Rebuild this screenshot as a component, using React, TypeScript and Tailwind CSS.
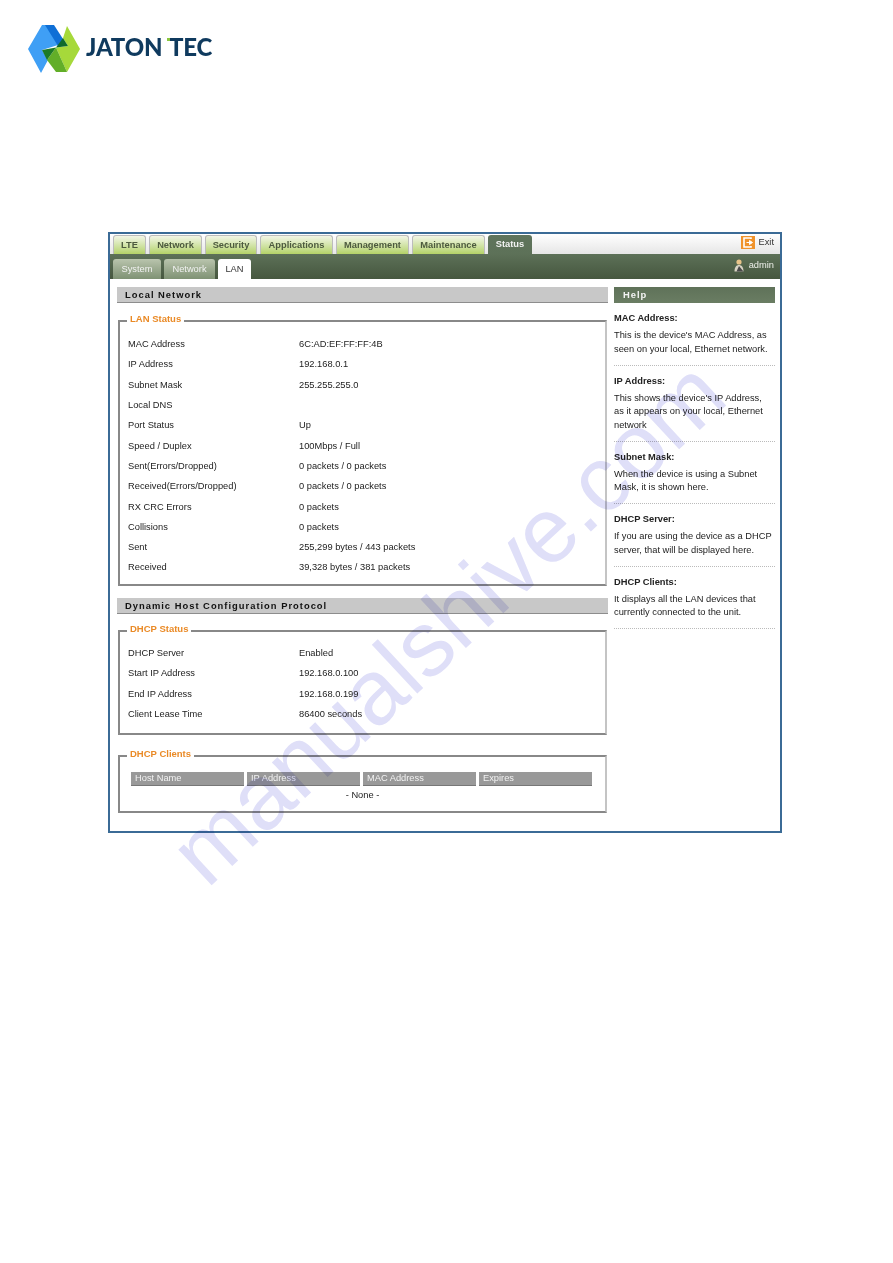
const font = { fontFamily: '"Liberation Sans", Arial, sans-serif' };

const topTabs = [
  { label: 'LTE', w: 'w-[33px]' },
  { label: 'Network', w: 'w-[53px]' },
  { label: 'Security', w: 'w-[52px]' },
  { label: 'Applications', w: 'w-[73px]' },
  { label: 'Management', w: 'w-[73px]' },
  { label: 'Maintenance', w: 'w-[73px]' },
];

const lanRows = [
  ['MAC Address', '6C:AD:EF:FF:FF:4B'],
  ['IP Address', '192.168.0.1'],
  ['Subnet Mask', '255.255.255.0'],
  ['Local DNS', ''],
  ['Port Status', 'Up'],
  ['Speed / Duplex', '100Mbps / Full'],
  ['Sent(Errors/Dropped)', '0 packets / 0 packets'],
  ['Received(Errors/Dropped)', '0 packets / 0 packets'],
  ['RX CRC Errors', '0 packets'],
  ['Collisions', '0 packets'],
  ['Sent', '255,299 bytes / 443 packets'],
  ['Received', '39,328 bytes / 381 packets'],
];

const dhcpRows = [
  ['DHCP Server', 'Enabled'],
  ['Start IP Address', '192.168.0.100'],
  ['End IP Address', '192.168.0.199'],
  ['Client Lease Time', '86400 seconds'],
];

const helpItems = [
  { title: 'MAC Address:', lines: ["This is the device's MAC Address, as", 'seen on your local, Ethernet network.'] },
  { title: 'IP Address:', lines: ["This shows the device's IP Address,", 'as it appears on your local, Ethernet', 'network'] },
  { title: 'Subnet Mask:', lines: ['When the device is using a Subnet', 'Mask, it is shown here.'] },
  { title: 'DHCP Server:', lines: ['If you are using the device as a DHCP', 'server, that will be displayed here.'] },
  { title: 'DHCP Clients:', lines: ['It displays all the LAN devices that', 'currently connected to the unit.'] },
];

function Logo() {
  return (
    <svg width="54" height="50" viewBox="26 24 54 50">
      <polygon points="27,49 41,25 46,25 57,45 41,50 47,60 40,73" fill="#3f9ff5" />
      <polygon points="44,25 53,25 62,39 57,46" fill="#0f6fd6" />
      <polygon points="66,26 79,49 66,72 55,47.500 67,46 62,38" fill="#a6d93a" />
      <polygon points="46,60 55,47.500 66,72 55,72" fill="#62ae28" />
      <polygon points="62,38 67,46 55,47.500" fill="#0e6b2c" />
      <polygon points="41,50 55,47.500 46,60" fill="#1c7a26" />
    </svg>
  );
}

function ExitIcon() {
  return (
    <svg width="14" height="13" viewBox="0 0 14 13">
      <rect width="14" height="13" fill="#f0932b" />
      <path d="M10 3V2H3v9h7v-1" fill="none" stroke="#fff" strokeWidth="1.6" />
      <path d="M5.500 6.500h5M8.500 4.500l3 2-3 2z" fill="#fff" stroke="#fff" />
    </svg>
  );
}

function AdminIcon() {
  return (
    <svg width="10" height="13" viewBox="0 0 10 13">
      <circle cx="5" cy="3" r="2.600" fill="#e8c48a" />
      <path d="M0.500 12.500C0.500 8 2.500 6 5 6s4.500 2 4.500 6.500z" fill="#d8d3c4" />
      <path d="M2.500 12.500 5 7l4.500 5.500z" fill="#4a4a4a" />
    </svg>
  );
}

function SectionBar({ title }: { title: string }) {
  return (
    <div className="h-[16px] bg-[#c8c8c8] border-b border-[#8d8d8d] pl-[8px] text-[9.4px] leading-[15px] font-bold tracking-[1px] text-[#111]">
      {title}
    </div>
  );
}

function Fieldset({ legend, className, children }: { legend: string; className: string; children: React.ReactNode }) {
  return (
    <fieldset className={`ml-px mr-[1px] border-2 border-t-[#888] border-l-[#888] border-r-[#c4c4c4] border-b-[#888] ${className}`}>
      <legend className="ml-[7px] px-[3px] pb-[4px] text-[9.5px] leading-[11px] font-bold text-[#ea8a26]">{legend}</legend>
      {children}
    </fieldset>
  );
}

function Row({ label, value }: { label: string; value: string }) {
  return (
    <div className="flex h-[20.3px] items-center pl-[8px] text-[9.3px] text-[#222]">
      <span className="w-[171px]">{label}</span>
      <span>{value}</span>
    </div>
  );
}

export default function App() {
  return (
    <div className="relative h-[1263px] overflow-hidden bg-white" style={font}>
      <div className="flex h-[232px] items-start pl-[27px] pt-[24px]">
        <Logo />
        <div className="relative ml-[5px] mt-[10px] text-[24px] leading-[25px] font-black tracking-[-0.2px] text-[#0f3a5e] [word-spacing:2px]" style={{ fontFamily: 'Lato, sans-serif' }}>
          JATON TEC
          <span className="absolute left-[81px] top-[4px] h-[3px] w-[3px] bg-[#8bc63f]" />
        </div>
      </div>

      <div className="ml-[108px] h-[601px] w-[674px] border-2 border-[#3b6b96]">
        <div className="flex h-[20px] items-end bg-gradient-to-b from-white to-[#e6e6e6] pl-[3px] pr-[6px]">
          <div className="flex h-[19px] gap-[3px]">
            {topTabs.map(t => (
              <div key={t.label} className={`${t.w} rounded-t-[3px] border border-b-0 border-[#bcbcbc] bg-gradient-to-b from-[#f3f6e6] to-[#b4d267] text-center text-[9.3px] leading-[18px] font-bold text-[#4d5a3e]`}>
                {t.label}
              </div>
            ))}
            <div className="w-[44px] rounded-t-[3px] bg-gradient-to-b from-[#5f745c] to-[#5d7158] text-center text-[9.3px] leading-[19px] font-bold text-[#f2f2f2]">
              Status
            </div>
          </div>
          <div className="ml-auto flex items-center gap-[4px] self-start pt-[2px] text-[9.3px] text-[#333]">
            <ExitIcon />
            <span>Exit</span>
          </div>
        </div>

        <div className="flex h-[25px] items-end bg-gradient-to-b from-[#5d7158] to-[#46573f] pl-[3px] pr-[6px]">
          <div className="flex h-[20px] gap-[3px]">
            <div className="w-[48px] rounded-t-[3px] bg-gradient-to-b from-[#b9c4ad] to-[#7f9274] text-center text-[9.3px] leading-[20px] text-[#f2f2f2]">System</div>
            <div className="w-[51px] rounded-t-[3px] bg-gradient-to-b from-[#b9c4ad] to-[#7f9274] text-center text-[9.3px] leading-[20px] text-[#f2f2f2]">Network</div>
            <div className="w-[33px] rounded-t-[3px] bg-white text-center text-[9.3px] leading-[20px] text-[#333]">LAN</div>
          </div>
          <div className="ml-auto flex items-center gap-[5px] self-start pt-[5px] text-[9.3px] text-[#eef0ea]">
            <AdminIcon />
            <span>admin</span>
          </div>
        </div>

        <div className="flex gap-[6px] pl-[7px] pt-[8px]">
          <div className="w-[491px]">
            <SectionBar title="Local Network" />
            <Fieldset legend="LAN Status" className="mt-[10px] h-[273px] pt-[7px]">
              {lanRows.map(r => <Row key={r[0] + r[1]} label={r[0]} value={r[1]} />)}
            </Fieldset>
            <div className="mt-[12px]"><SectionBar title="Dynamic Host Configuration Protocol" /></div>
            <Fieldset legend="DHCP Status" className="mt-[9px] h-[112px] pt-[6px]">
              {dhcpRows.map(r => <Row key={r[0]} label={r[0]} value={r[1]} />)}
            </Fieldset>
            <Fieldset legend="DHCP Clients" className="mt-[13px] h-[65px] pt-[9px]">
              <div className="flex gap-[3px] pl-[11px] pr-[13px]">
                {['Host Name', 'IP Address', 'MAC Address', 'Expires'].map(h => (
                  <div key={h} className="h-[14px] flex-1 border-b border-[#777] bg-[#999] pl-[4px] text-[9.3px] leading-[13px] text-[#f2f2f2]">{h}</div>
                ))}
              </div>
              <div className="pt-[3px] text-center text-[9.3px] leading-[12px] text-[#222]">- None -</div>
            </Fieldset>
          </div>

          <div className="w-[161px]">
            <div className="h-[16px] bg-gradient-to-b from-[#5f7259] to-[#6a7d63] pl-[9px] text-[9.4px] leading-[15px] font-bold tracking-[1px] text-[#f4f4f4]">
              Help
            </div>
            {helpItems.map(item => (
              <div key={item.title} className="border-b border-dotted border-[#bbb] pb-[8.6px] pt-[9px]">
                <div className="text-[9.3px] leading-[13px] font-bold text-[#222]">{item.title}</div>
                <div className="pt-[4px] text-[9.3px] leading-[13.500px] text-[#222]">
                  {item.lines.map(l => <div key={l}>{l}</div>)}
                </div>
              </div>
            ))}
          </div>
        </div>
      </div>

      <div className="pointer-events-none absolute left-[447px] top-[622px] whitespace-nowrap text-[92px] leading-none text-[#dfdff8] mix-blend-multiply -translate-x-1/2 -translate-y-1/2 -rotate-[43deg]">
        manualshive.com
      </div>
    </div>
  );
}
